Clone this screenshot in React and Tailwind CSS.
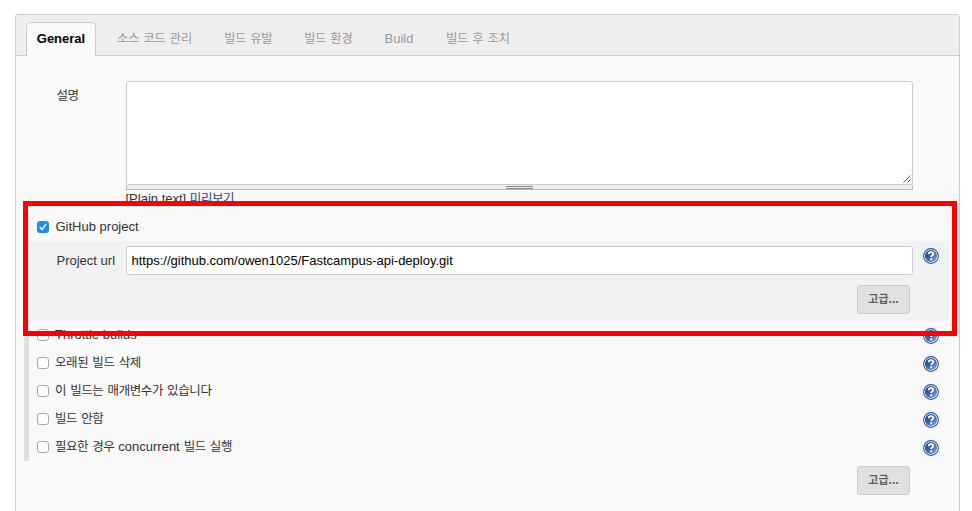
import React from "react";

const tabs = [
  { label: "소스 코드 관리", cls: "w-[107px] text-[12.5px] tracking-[-0.4px]" },
  { label: "빌드 유발", cls: "w-20 text-[12.5px] tracking-[-0.4px]" },
  { label: "빌드 환경", cls: "w-[81px] text-[12.5px] tracking-[-0.4px]" },
  { label: "Build", cls: "w-[61px] -ml-[0.5px] mr-[0.5px] text-[13px]" },
  { label: "빌드 후 조치", cls: "w-24 text-[12.5px] tracking-[-0.4px]" },
];

const options = [
  { label: <span className="[word-spacing:0px]">Throttle builds</span> },
  { label: <span className="text-[12.5px] tracking-[-0.4px]">오래된 빌드 삭제</span> },
  { label: <span className="text-[12.5px] tracking-[-0.4px]">이 빌드는 매개변수가 있습니다</span> },
  { label: <span className="text-[12.5px] tracking-[-0.4px]">빌드 안함</span> },
  {
    label: (
      <span className="text-[12.5px] tracking-[-0.45px]">
        필요한 경우 <span className="text-[13px] tracking-normal">concurrent</span> 빌드 실행
      </span>
    ),
  },
];

function Help() {
  return (
    <svg className="block size-4 shrink-0" viewBox="0 0 16 16" aria-label="Help">
      <defs>
        <linearGradient id="helpFill" x1="0.15" y1="0.2" x2="0.85" y2="0.9">
          <stop offset="0" stopColor="#1d4a94" />
          <stop offset="0.5" stopColor="#3b68ad" />
          <stop offset="1" stopColor="#7ba0d2" />
        </linearGradient>
      </defs>
      <circle cx="8" cy="8" r="7.4" fill="#fff" stroke="#2d569b" strokeWidth="1.1" />
      <circle cx="8" cy="8" r="6.1" fill="url(#helpFill)" />
      <path d="M5.7 6.2C5.7 4.6 6.7 4.1 8 4.1s2.3.6 2.3 1.8c0 1.4-2 1.5-2 3.2" fill="none" stroke="#fff" strokeWidth="1.9" />
      <rect x="7.2" y="10.2" width="2" height="2" fill="#fff" />
    </svg>
  );
}

function Check({ checked }) {
  if (checked) {
    return (
      <span className="flex size-3 items-center justify-center rounded-[3px] bg-[#1e8cff]">
        <svg className="size-3" viewBox="0 0 12 12">
          <path d="M3.2 6.4 5.1 8.6 8.8 3.4" fill="none" stroke="#fff" strokeWidth="1.5" strokeLinecap="round" />
        </svg>
      </span>
    );
  }
  return <span className="size-3 rounded-[3px] border border-[#aaa] bg-white" />;
}

function AdvancedButton() {
  return (
    <button className="h-[29px] w-[53px] rounded-[3px] border border-[#ccc] bg-[#e0e0e0] pb-0.5 text-[11px] leading-none font-bold text-[#606060]">
      고급<span className="text-[12px]">...</span>
    </button>
  );
}

export default function App() {
  return (
    <div className="relative h-[511px] w-[972px] overflow-hidden bg-white pt-3.5 pl-[15px] font-['Liberation_Sans','Noto_Sans_CJK_KR',sans-serif] text-[13px] leading-5 [word-spacing:1px] whitespace-nowrap text-[#333]">
      <div className="h-[520px] w-[945px] rounded-t-[3px] border border-[#ccc] bg-[#f9f9f9]">
        <nav className="flex h-[41px] items-end border-b border-[#ccc] bg-[#eee] pl-2.5 text-[#999]">
          <div className="-mb-px h-[34px] w-[70px] shrink-0 rounded-t-[5px] border border-b-0 border-[#ccc] bg-[#f9f9f9] pt-1.5 text-center font-bold text-black">
            General
          </div>
          <div className="flex h-[33px] pt-[7px] pl-[21px]">
            {tabs.map((t) => (
              <div key={t.label} className={`leading-5 ${t.cls}`}>{t.label}</div>
            ))}
          </div>
        </nav>

        <section className="flex h-[157px] pt-[25px]">
          <div className="w-[110px] pt-[5px] pl-[40.5px] text-[12.5px] leading-5 tracking-[-0.4px]">설명</div>
          <div className="w-[787px]">
            <div className="flex h-[104px] items-end justify-end rounded-[3px] border border-[#ccc] bg-white">
              <svg className="size-2.5" viewBox="0 0 10 10">
                <path d="M1.5 8.5 8.5 1.5M5.5 8.5 8.5 5.5" fill="none" stroke="#555" strokeWidth="1" />
              </svg>
            </div>
            <div className="flex h-[5px] justify-center border-x border-b border-[#bbb] bg-[#eee]">
              <div className="mt-px h-[3px] w-[27px] border-y border-[#888]" />
            </div>
            <div className="-mt-px -ml-[0.5px] [word-spacing:0px]">
              [Plain text] <a className="text-[12.5px] tracking-[-0.4px] text-[#204a87]">미리보기</a>
            </div>
          </div>
        </section>

        <section className="ml-2 w-[925px] border-l-[5px] border-[#e0e0e0] [word-spacing:0px]">
          <div className="flex h-7 items-center gap-1.5 pl-2">
            <Check checked />
            <span className="pl-[0.5px]">GitHub project</span>
          </div>
          <div className="h-20 bg-[#f2f2f2] pt-[5px]">
            <div className="flex">
              <div className="w-[97px] pt-[5px] pl-[27.5px]">Project url</div>
              <div className="h-[29px] w-[787px] rounded-[3px] border border-[#ccc] bg-white pt-1 pl-[4.5px] text-black">
                https://github.com/owen1025/Fastcampus-api-deploy.git
              </div>
              <div className="pt-0.5 pl-2.5"><Help /></div>
            </div>
            <div className="flex justify-end pt-2.5 pr-[39px]"><AdvancedButton /></div>
          </div>
          {options.map((o, i) => (
            <div key={i} className="flex h-7 items-center gap-1.5 pr-2.5 pl-2">
              <Check />
              <span className="grow [word-spacing:1px]">{o.label}</span>
              <div className="pt-0.5"><Help /></div>
            </div>
          ))}
        </section>
        <div className="flex justify-end pt-[5px] pr-[49px]"><AdvancedButton /></div>
      </div>

      <div className="absolute top-[201px] left-[23px] h-[135px] w-[934px] border-5 border-[#ff0000]" />
    </div>
  );
}
